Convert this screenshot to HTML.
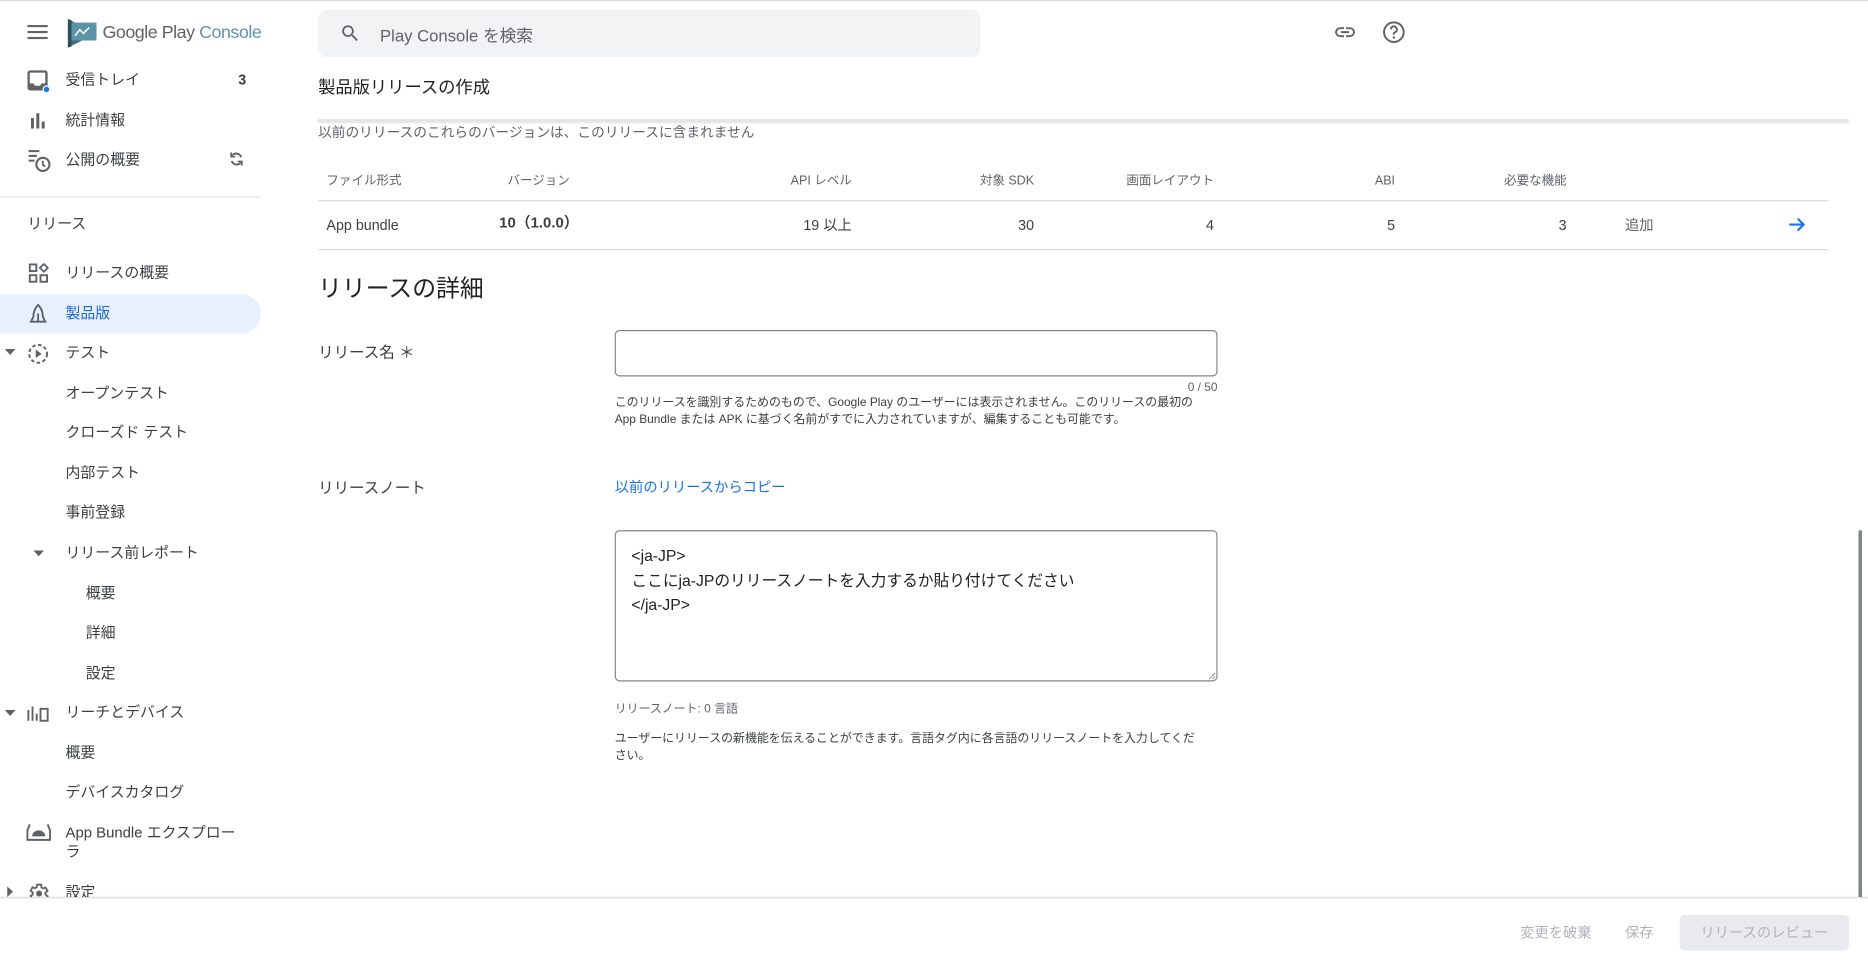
<!DOCTYPE html>
<html><head><meta charset="utf-8">
<style>
*{margin:0;padding:0;box-sizing:border-box}
html,body{width:1868px;height:965px;overflow:hidden;background:#fff}
body{font-family:"Liberation Sans","Noto Sans CJK JP",sans-serif;color:#3c4043}
#w{position:absolute;left:0;top:0;width:1568px;height:810px;transform:scale(1.19133);transform-origin:0 0}
.a{position:absolute;white-space:nowrap}
.t{font-size:13px;line-height:18px;color:#3c4043}
.nav{position:absolute;left:55px;font-size:12.5px;line-height:18px;color:#3c4043;white-space:nowrap}
.ic{position:absolute}
.th{font-size:10.5px;line-height:14px;color:#5f6368;position:absolute;white-space:nowrap}
.td{font-size:12px;line-height:16px;color:#3c4043;position:absolute;white-space:nowrap}
.r{text-align:right}
.hl{position:absolute;height:1px;background:#dadce0}
.help{font-size:10px;line-height:13.5px;color:#3c4043;position:absolute}
</style></head><body><div id="w">
<div style="position:absolute;left:0;top:0;width:1568px;height:1px;background:#dadce0"></div>
<svg class="ic" style="left:23px;top:20px" width="18" height="14" viewBox="0 0 18 14"><rect y="1" width="17" height="1.8" fill="#5f6368"/><rect y="6" width="17" height="1.8" fill="#5f6368"/><rect y="11" width="17" height="1.8" fill="#5f6368"/></svg>
<svg class="ic" style="left:56px;top:15px" width="26" height="26" viewBox="0 0 26 26"><path d="M1 1 L25 13 L1 25Z" fill="#3f6b7a"/><rect x="4" y="4" width="21" height="15" fill="#5b93a8"/><path d="M1 1 L4 2 L4 24 L1 25Z" fill="#2e4f5a"/><path d="M7 15 L11 10 L14 13 L19 8" stroke="#fff" stroke-width="1.3" fill="none"/></svg>
<div class="a" style="left:86px;top:18px;font-size:15px;line-height:19px;color:#5f6368;letter-spacing:-0.4px">Google Play <span style="color:#5f93a6">Console</span></div>
<div style="position:absolute;left:267px;top:8px;width:556px;height:40px;background:#f1f3f4;border-radius:8px"></div>
<svg class="ic" style="left:285px;top:19px" width="18" height="18" viewBox="0 0 24 24"><path d="M15.5 14h-.8l-.3-.3A6.5 6.5 0 1 0 9.5 16a6.5 6.5 0 0 0 4.2-1.6l.3.3v.8l5 5 1.5-1.5-5-5zm-6 0a4.5 4.5 0 1 1 0-9 4.5 4.5 0 0 1 0 9z" fill="#5f6368"/></svg>
<div class="a" style="left:319px;top:20px;font-size:14px;line-height:20px;color:#5f6368">Play Console を検索</div>
<svg class="ic" style="left:1119px;top:17px" width="20" height="20" viewBox="0 0 24 24"><path d="M3.9 12c0-1.7 1.4-3.1 3.1-3.1h4V7H7a5 5 0 0 0 0 10h4v-1.9H7c-1.7 0-3.1-1.4-3.1-3.1zM8 13h8v-2H8v2zm9-6h-4v1.9h4c1.7 0 3.1 1.4 3.1 3.1s-1.4 3.1-3.1 3.1h-4V17h4a5 5 0 0 0 0-10z" fill="#5f6368"/></svg>
<svg class="ic" style="left:1159px;top:16px" width="22" height="22" viewBox="0 0 24 24"><circle cx="12" cy="12" r="9" stroke="#5f6368" stroke-width="1.8" fill="none"/><path d="M9.2 9.5a2.8 2.8 0 1 1 3.8 2.6c-.7.3-1 .8-1 1.5v.6" stroke="#5f6368" stroke-width="1.8" fill="none"/><circle cx="12" cy="17" r="1.1" fill="#5f6368"/></svg>
<svg class="ic" style="left:23px;top:59px" width="20" height="20" viewBox="0 0 20 20"><rect x="1" y="1" width="15" height="15" rx="1.5" stroke="#5f6368" stroke-width="2" fill="none"/><path d="M1 11h4l1.5 2h4l1.5-2h4v5H1z" fill="#5f6368"/><circle cx="16" cy="16" r="2.8" fill="#1a73e8" stroke="#fff" stroke-width="1"/></svg>
<div class="nav" style="top:58px">受信トレイ</div>
<div class="a" style="left:200px;top:60px;font-size:12px;font-weight:bold;color:#3c4043">3</div>
<svg class="ic" style="left:25px;top:94px" width="14" height="14" viewBox="0 0 14 14"><rect x="1" y="5" width="2.5" height="9" fill="#5f6368"/><rect x="5.5" y="1" width="2.5" height="13" fill="#5f6368"/><rect x="10" y="8" width="2.5" height="6" fill="#5f6368"/></svg>
<div class="nav" style="top:92px">統計情報</div>
<svg class="ic" style="left:23px;top:124px" width="22" height="22" viewBox="0 0 22 22"><rect x="1" y="2" width="9" height="1.7" fill="#5f6368"/><rect x="1" y="6" width="7" height="1.7" fill="#5f6368"/><rect x="1" y="10" width="5" height="1.7" fill="#5f6368"/><circle cx="13" cy="14" r="5.5" stroke="#5f6368" stroke-width="1.8" fill="none"/><path d="M13 11v3.5l2 1.2" stroke="#5f6368" stroke-width="1.5" fill="none"/></svg>
<div class="nav" style="top:125px">公開の概要</div>
<svg class="ic" style="left:192px;top:127px" width="13" height="13" viewBox="0 0 13 13"><path d="M3 3.5A4.3 4.3 0 0 1 10.5 5M10 9.5A4.3 4.3 0 0 1 2.5 8" stroke="#5f6368" stroke-width="1.6" fill="none"/><path d="M2 1v3.5h3.5M11 12V8.5H7.5" stroke="#5f6368" stroke-width="1.4" fill="none"/></svg>
<div style="position:absolute;left:0;top:165px;width:219px;height:1px;background:#e0e0e0"></div>
<div class="nav" style="left:23px;top:179px">リリース</div>
<svg class="ic" style="left:24px;top:221px" width="17" height="17" viewBox="0 0 17 17"><rect x="1" y="1" width="5.5" height="5.5" stroke="#5f6368" stroke-width="1.6" fill="none"/><rect x="1" y="10" width="5.5" height="5.5" stroke="#5f6368" stroke-width="1.6" fill="none"/><rect x="10" y="10" width="5.5" height="5.5" stroke="#5f6368" stroke-width="1.6" fill="none"/><path d="M12.8 0.5l3.3 3.3-3.3 3.3-3.3-3.3z" stroke="#5f6368" stroke-width="1.5" fill="none"/></svg>
<div class="nav" style="top:220px">リリースの概要</div>
<div style="position:absolute;left:0;top:247px;width:219px;height:33px;background:#e8f0fe;border-radius:0 17px 17px 0"></div>
<svg class="ic" style="left:24px;top:255px" width="16" height="17" viewBox="0 0 16 17"><path d="M8 1 C5 4 4 7 4 11 L2 15 H14 L12 11 C12 7 11 4 8 1Z" stroke="#5f6368" stroke-width="1.6" fill="none"/><path d="M8 8v7" stroke="#5f6368" stroke-width="1.6"/></svg>
<div class="nav" style="top:254px;color:#1967d2">製品版</div>
<svg class="ic" style="left:4px;top:293px" width="9" height="6" viewBox="0 0 9 6"><path d="M0 0h9L4.5 5z" fill="#5f6368"/></svg>
<svg class="ic" style="left:23px;top:288px" width="18" height="18" viewBox="0 0 18 18"><circle cx="9" cy="9" r="7.5" stroke="#5f6368" stroke-width="1.6" fill="none" stroke-dasharray="3 2"/><path d="M7 5.5v7l5-3.5z" fill="#5f6368"/></svg>
<div class="nav" style="top:287px">テスト</div>
<div class="nav" style="top:321px">オープンテスト</div>
<div class="nav" style="top:354px">クローズド テスト</div>
<div class="nav" style="top:388px">内部テスト</div>
<div class="nav" style="top:421px">事前登録</div>
<svg class="ic" style="left:28px;top:462px" width="9" height="6" viewBox="0 0 9 6"><path d="M0 0h9L4.5 5z" fill="#5f6368"/></svg>
<div class="nav" style="top:455px">リリース前レポート</div>
<div class="nav" style="left:72px;top:489px">概要</div>
<div class="nav" style="left:72px;top:522px">詳細</div>
<div class="nav" style="left:72px;top:556px">設定</div>
<svg class="ic" style="left:4px;top:596px" width="9" height="6" viewBox="0 0 9 6"><path d="M0 0h9L4.5 5z" fill="#5f6368"/></svg>
<svg class="ic" style="left:22px;top:592px" width="20" height="14" viewBox="0 0 20 14"><rect x="1" y="4" width="1.6" height="9" fill="#5f6368"/><rect x="4.5" y="1" width="1.6" height="12" fill="#5f6368"/><rect x="8" y="7" width="1.6" height="6" fill="#5f6368"/><rect x="12" y="3" width="6" height="10" stroke="#5f6368" stroke-width="1.6" fill="none"/></svg>
<div class="nav" style="top:589px">リーチとデバイス</div>
<div class="nav" style="top:623px">概要</div>
<div class="nav" style="top:656px">デバイスカタログ</div>
<svg class="ic" style="left:22px;top:690px" width="21" height="18" viewBox="0 0 21 18"><path d="M3 2 L1 7 V15 H20 V7 L18 2" stroke="#5f6368" stroke-width="1.6" fill="none"/><path d="M5 12 a5.5 5 0 0 1 11 0z" fill="#5f6368"/></svg>
<div class="nav" style="top:691px;line-height:16px">App Bundle エクスプロー<br>ラ</div>
<svg class="ic" style="left:6px;top:744px" width="6" height="9" viewBox="0 0 6 9"><path d="M0 0v9l5-4.5z" fill="#5f6368"/></svg>
<svg class="ic" style="left:22px;top:740px" width="20" height="20" viewBox="0 0 24 24"><path d="M19.4 13a7.5 7.5 0 0 0 0-2l2.1-1.6-2-3.5-2.5 1a7 7 0 0 0-1.7-1L15 3h-4l-.4 2.7a7 7 0 0 0-1.7 1l-2.5-1-2 3.5L6.6 11a7.5 7.5 0 0 0 0 2l-2.1 1.6 2 3.5 2.5-1a7 7 0 0 0 1.7 1L11 21h4l.4-2.7a7 7 0 0 0 1.700-1l2.5 1 2-3.5z" stroke="#5f6368" stroke-width="1.8" fill="none"/><circle cx="13" cy="12" r="3" fill="#5f6368"/></svg>
<div class="nav" style="top:740px">設定</div>
<div class="a" style="left:267px;top:64px;font-size:14.5px;line-height:20px;color:#202124">製品版リリースの作成</div>
<div style="position:absolute;left:267px;top:100px;width:1285px;height:2px;background:#e4e4e4;box-shadow:0 1px 2px rgba(0,0,0,.15)"></div>
<div class="a" style="left:267px;top:104px;font-size:11.5px;line-height:16px;color:#5f6368">以前のリリースのこれらのバージョンは、このリリースに含まれません</div>
<div class="th" style="left:274px;top:145px">ファイル形式</div>
<div class="th" style="left:426px;top:145px">バージョン</div>
<div class="th r" style="left:615px;width:100px;top:145px">API レベル</div>
<div class="th r" style="left:768px;width:100px;top:145px">対象 SDK</div>
<div class="th r" style="left:919px;width:100px;top:145px">画面レイアウト</div>
<div class="th r" style="left:1071px;width:100px;top:145px">ABI</div>
<div class="th r" style="left:1215px;width:100px;top:145px">必要な機能</div>
<div class="hl" style="left:267px;top:168px;width:1268px"></div>
<div class="td" style="left:274px;top:181px">App bundle</div>
<div class="td" style="left:419px;top:179px;font-weight:bold;font-size:12.5px">10（1.0.0）</div>
<div class="td r" style="left:615px;width:100px;top:181px">19 以上</div>
<div class="td r" style="left:768px;width:100px;top:181px">30</div>
<div class="td r" style="left:919px;width:100px;top:181px">4</div>
<div class="td r" style="left:1071px;width:100px;top:181px">5</div>
<div class="td r" style="left:1215px;width:100px;top:181px">3</div>
<div class="td" style="left:1364px;top:181px;color:#5f6368">追加</div>
<svg class="ic" style="left:1501px;top:182px" width="15" height="13" viewBox="0 0 15 13"><path d="M1 6.5h12M8 1.5l5 5-5 5" stroke="#1a73e8" stroke-width="1.8" fill="none"/></svg>
<div class="hl" style="left:267px;top:209px;width:1268px"></div>
<div class="a" style="left:267px;top:229px;font-size:20px;line-height:28px;color:#202124">リリースの詳細</div>
<div class="a t" style="left:267px;top:287px">リリース名 ＊</div>
<div style="position:absolute;left:516px;top:277px;width:506px;height:39px;border:1px solid #80868b;border-radius:4px"></div>
<div class="a" style="left:960px;width:62px;text-align:right;top:319px;font-size:10px;line-height:13px;color:#5f6368">0 / 50</div>
<div class="help" style="left:516px;top:332px;width:510px">このリリースを識別するためのもので、Google Play のユーザーには表示されません。このリリースの最初の<br>App Bundle または APK に基づく名前がすでに入力されていますが、編集することも可能です。</div>
<div class="a t" style="left:267px;top:401px">リリースノート</div>
<div class="a" style="left:516px;top:400px;font-size:12px;line-height:18px;color:#1a73e8">以前のリリースからコピー</div>
<div style="position:absolute;left:516px;top:445px;width:506px;height:127px;border:1px solid #80868b;border-radius:4px"></div>
<div class="a" style="left:530px;top:457px;font-size:13.2px;line-height:20.5px;color:#202124">&lt;ja-JP&gt;<br>ここにja-JPのリリースノートを入力するか貼り付けてください<br>&lt;/ja-JP&gt;</div>
<svg class="ic" style="left:1014px;top:564px" width="7" height="7" viewBox="0 0 7 7"><path d="M6 1L1 6M6 4L4 6" stroke="#888" stroke-width="0.8"/></svg>
<div class="help" style="left:516px;top:589px;color:#5f6368">リリースノート: 0 言語</div>
<div class="help" style="left:516px;top:614px;width:510px">ユーザーにリリースの新機能を伝えることができます。言語タグ内に各言語のリリースノートを入力してくだ<br>さい。</div>
<div style="position:absolute;left:1560px;top:445px;width:3px;height:310px;background:#80868b;border-radius:2px"></div>
<div style="position:absolute;left:0;top:753px;width:1568px;height:57px;background:#fff;border-top:1px solid #dadce0;box-shadow:0 -1px 2px rgba(0,0,0,.06)"></div>
<div class="a" style="left:1276px;top:775px;font-size:12px;line-height:16px;color:#b0b3b8">変更を破棄</div>
<div class="a" style="left:1364px;top:775px;font-size:12px;line-height:16px;color:#b0b3b8">保存</div>
<div style="position:absolute;left:1410px;top:768px;width:142px;height:30px;background:#e8eaed;border-radius:4px;font-size:12px;line-height:30px;text-align:center;color:#b0b3b8">リリースのレビュー</div>
</div></body></html>
